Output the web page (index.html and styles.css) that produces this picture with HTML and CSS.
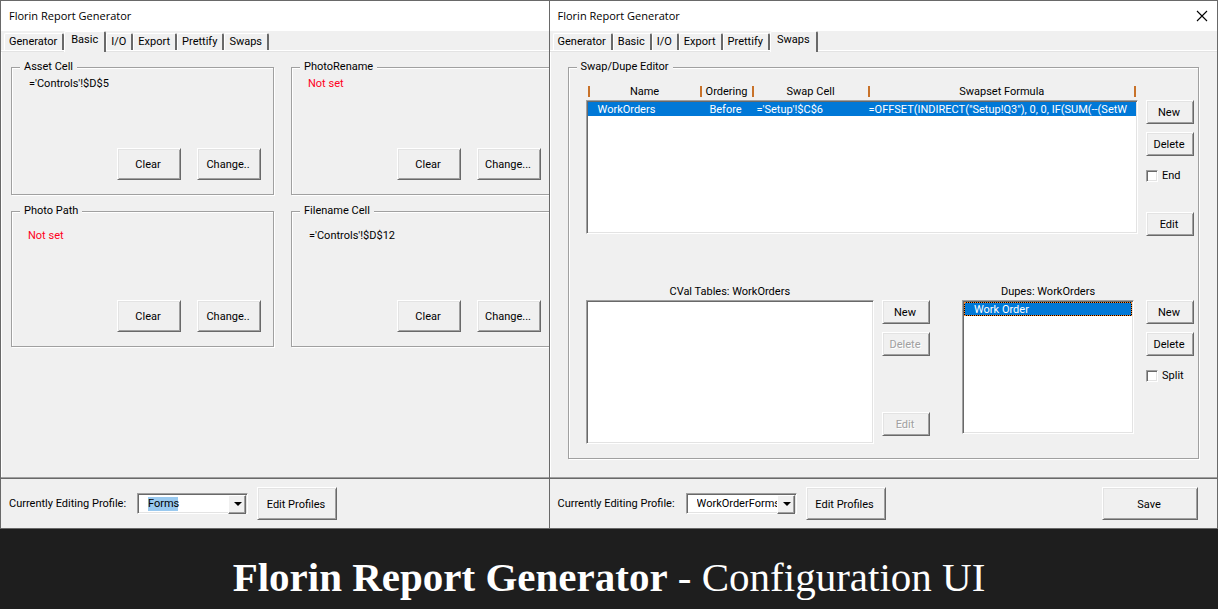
FILE: index.html
```html
<!DOCTYPE html>
<html lang="en">
<head>
<meta charset="utf-8">
<title>Florin Report Generator - Configuration UI</title>
<link rel="stylesheet" href="styles.css">
</head>
<body>
<main class="windows">
  <section class="window">
    <header class="titlebar"><h2 class="window-title">Florin Report Generator</h2></header>
    <nav class="tabs" role="tablist">
      <button class="tab" role="tab">Generator</button>
      <button class="tab selected" role="tab" aria-selected="true">Basic</button>
      <button class="tab" role="tab">I/O</button>
      <button class="tab" role="tab">Export</button>
      <button class="tab" role="tab">Prettify</button>
      <button class="tab" role="tab">Swaps</button>
    </nav>
    <div class="panel basic-panel">
      <fieldset class="frame cell-frame">
        <legend>Asset Cell</legend>
        <p class="value">='Controls'!$D$5</p>
        <div class="actions"><button class="btn">Clear</button><button class="btn">Change..</button></div>
      </fieldset>
      <fieldset class="frame cell-frame">
        <legend>PhotoRename</legend>
        <p class="value unset">Not set</p>
        <div class="actions"><button class="btn">Clear</button><button class="btn">Change...</button></div>
      </fieldset>
      <fieldset class="frame cell-frame tall">
        <legend>Photo Path</legend>
        <p class="value unset">Not set</p>
        <div class="actions"><button class="btn">Clear</button><button class="btn">Change..</button></div>
      </fieldset>
      <fieldset class="frame cell-frame tall">
        <legend>Filename Cell</legend>
        <p class="value">='Controls'!$D$12</p>
        <div class="actions"><button class="btn">Clear</button><button class="btn">Change...</button></div>
      </fieldset>
    </div>
    <footer class="profile-bar">
      <label class="profile-label" for="profile-a">Currently Editing Profile:</label>
      <span class="combo"><select id="profile-a" class="highlighted"><option>Forms</option></select></span>
      <button class="btn profile-btn">Edit Profiles</button>
    </footer>
  </section>

  <section class="window">
    <header class="titlebar">
      <h2 class="window-title">Florin Report Generator</h2>
      <button class="close" aria-label="Close"><svg width="12" height="12" viewBox="0 0 12 12"><path d="M1 1L11 11M11 1L1 11" stroke="#000" stroke-width="1.1" fill="none"/></svg></button>
    </header>
    <nav class="tabs" role="tablist">
      <button class="tab" role="tab">Generator</button>
      <button class="tab" role="tab">Basic</button>
      <button class="tab" role="tab">I/O</button>
      <button class="tab" role="tab">Export</button>
      <button class="tab" role="tab">Prettify</button>
      <button class="tab selected" role="tab" aria-selected="true">Swaps</button>
    </nav>
    <div class="panel swap-panel">
      <fieldset class="frame swap-frame">
        <legend>Swap/Dupe Editor</legend>
        <div class="swap-row">
          <table class="swap-table">
            <thead><tr><th>Name</th><th>Ordering</th><th>Swap Cell</th><th>Swapset Formula</th></tr></thead>
            <tbody class="sunken"><tr><td>WorkOrders</td><td>Before</td><td>='Setup'!$C$6</td><td>=OFFSET(INDIRECT("Setup!Q3"), 0, 0, IF(SUM(--(SetW</td></tr></tbody>
          </table>
          <div class="side">
            <button class="btn">New</button>
            <button class="btn">Delete</button>
            <label class="check"><input type="checkbox">End</label>
            <button class="btn last">Edit</button>
          </div>
        </div>
        <div class="list-row">
          <div class="list-box cval">
            <h3 class="list-title" id="cval-title">CVal Tables: WorkOrders</h3>
            <ul class="sunken list" role="listbox" aria-labelledby="cval-title"></ul>
          </div>
          <div class="side">
            <button class="btn">New</button>
            <button class="btn" disabled>Delete</button>
            <button class="btn last" disabled>Edit</button>
          </div>
          <div class="list-box dupes">
            <h3 class="list-title" id="dupes-title">Dupes: WorkOrders</h3>
            <ul class="sunken list" role="listbox" aria-labelledby="dupes-title"><li class="item" role="option" aria-selected="true">Work Order</li></ul>
          </div>
          <div class="side">
            <button class="btn">New</button>
            <button class="btn">Delete</button>
            <label class="check"><input type="checkbox">Split</label>
          </div>
        </div>
      </fieldset>
    </div>
    <footer class="profile-bar">
      <label class="profile-label" for="profile-b">Currently Editing Profile:</label>
      <span class="combo"><select id="profile-b"><option>WorkOrderForms</option></select></span>
      <button class="btn profile-btn">Edit Profiles</button>
      <button class="btn save">Save</button>
    </footer>
  </section>
</main>
<h1 class="caption"><strong>Florin Report Generator</strong> - Configuration UI</h1>
</body>
</html>
```
FILE: styles.css
```css
:root {
  --face: #f0f0f0;
  --shadow: #a0a0a0;
  --dark: #696969;
  --soft: #e3e3e3;
  --accent: #0078d7;
}

* { box-sizing: border-box; }

body {
  margin: 0;
  min-height: 100vh;
  display: flex;
  flex-direction: column;
  background: #1e1e1e;
  color: #000;
  font: 11px/14px Roboto, sans-serif;
}

button, select, input { font: inherit; color: inherit; }
h1, h2, h3, p, ul { margin: 0; padding: 0; font: inherit; }

.windows {
  flex: 1;
  display: grid;
  grid-template-columns: minmax(0, 549fr) minmax(0, 669fr);
  border-right: 1px solid var(--dark);
}

.window {
  display: flex;
  flex-direction: column;
  overflow: hidden;
  background: var(--face);
  border: 1px solid var(--dark);
  border-right: 0;
}

.titlebar {
  display: flex;
  align-items: center;
  justify-content: space-between;
  height: 30px;
  padding: 0 9px 0 8px;
  background: #fff;
}

.window-title { font-family: "Open Sans", sans-serif; font-size: 11px; }

.close {
  display: flex;
  padding: 0;
  border: 0;
  background: none;
}

.tabs {
  display: flex;
  align-items: flex-end;
  height: 21px;
  padding: 0 3px;
  box-shadow: inset 0 -1px var(--soft), inset 0 -2px #fff;
}

.tab {
  height: 17px;
  margin-bottom: 2px;
  padding: 0 5px 0 4px;
  background: var(--face);
  border: 1px solid #fff;
  border-right: 2px solid var(--dark);
  border-bottom: 0;
  border-radius: 2px 2px 0 0;
  line-height: 16px;
  white-space: nowrap;
}

.tab.selected {
  height: 21px;
  margin-bottom: 0;
  padding: 0 6px 4px;
}

.panel { flex: 1; padding: 8px 18px 19px 17px; border-left: 1px solid #fff; }

.basic-panel {
  display: grid;
  grid-template-columns: 263px 263px;
  align-content: start;
  gap: 9px 17px;
  padding-left: 9px;
}

.frame {
  display: flex;
  flex-direction: column;
  min-width: 0;
  margin: 0;
  padding: 0;
  border: 1px solid var(--shadow);
  box-shadow: inset 1px 1px #fff, 1px 1px #fff;
}

.frame legend {
  padding: 0 4px;
  background: var(--face);
}

.cell-frame { padding: 2px 12px 14px 17px; }
.cell-frame legend { margin-left: -9px; }
.cell-frame.tall { padding-top: 10px; }
.value { min-height: 72px; line-height: 16px; }
.value.unset { color: #ff0020; margin-left: -1px; }

.actions {
  display: flex;
  justify-content: flex-end;
  gap: 16px;
}

.btn {
  padding: 2px 2px 0 0;
  background: var(--face);
  border: 1px solid;
  border-color: #fff var(--dark) var(--dark) #fff;
  box-shadow: inset 1px 1px var(--soft), inset -1px -1px var(--shadow);
  white-space: nowrap;
}

.btn:disabled { color: var(--shadow); text-shadow: 1px 1px #fff; }
.actions .btn { width: 64px; height: 32px; }

.sunken {
  background: #fff;
  border: 1px solid;
  border-color: var(--shadow) #fff #fff var(--shadow);
  box-shadow: inset 1px 1px var(--dark), inset -1px -1px var(--soft);
}

.swap-panel { display: flex; }
.swap-frame { flex: 1; padding: 10px 4px 14px 17px; }
.swap-frame legend { margin-left: -9px; }

.swap-row { display: flex; gap: 8px; margin-bottom: 48px; }

.swap-table {
  flex: 1;
  min-width: 0;
  display: flex;
  flex-direction: column;
}

.swap-table thead, .swap-table tbody { display: block; }

.swap-table tr {
  display: grid;
  grid-template-columns: 112px 52px 116px minmax(0, 1fr);
}

.swap-table thead { height: 16px; padding: 2px 2px 0; }

.swap-table th {
  height: 11px;
  padding: 0;
  border-left: 2px solid #c8722a;
  font-weight: normal;
  line-height: 12px;
  white-space: nowrap;
}

.swap-table th:last-child { border-right: 2px solid #c8722a; }
.swap-table tbody { height: 134px; padding: 1px; }
.swap-table tbody tr { height: 14px; background: var(--accent); color: #fff; line-height: 16px; }
.swap-table td { padding: 0; white-space: nowrap; }
.swap-table td:nth-child(1) { padding-left: 10px; }
.swap-table td:nth-child(2) { text-align: center; }
.swap-table td:nth-child(3) { padding-left: 5px; }
.swap-table td:nth-child(4) { padding-left: 1px; }

.side {
  display: flex;
  flex-direction: column;
  gap: 8px;
  width: 48px;
  min-height: 152px;
  padding-top: 16px;
}

.side .btn { height: 24px; }
.side .last { margin-top: auto; }

.check {
  display: flex;
  align-items: center;
  gap: 4px;
  height: 24px;
}

.check input {
  appearance: none;
  width: 12px;
  height: 12px;
  margin: 0;
  background: #fff;
  border: 1px solid;
  border-color: var(--shadow) #fff #fff var(--shadow);
  box-shadow: inset 1px 1px var(--dark), inset -1px -1px var(--soft);
}

.list-row { display: flex; align-items: flex-start; }
.list-title { height: 16px; line-height: 16px; text-align: center; }
.list { list-style: none; padding: 1px; }
.cval { flex: 1; margin-right: 8px; }
.cval .list { height: 144px; }
.dupes { width: 172px; margin: 0 12px 0 32px; }
.dupes .list { height: 134px; }

.item {
  height: 14px;
  padding-left: 9px;
  border: 1px dotted #ff8728;
  background:
    linear-gradient(var(--accent), var(--accent)) padding-box,
    linear-gradient(#000, #000) border-box;
  color: #fff;
}

.profile-bar {
  display: flex;
  align-items: center;
  height: 50px;
  padding: 0 19px 0 8px;
  border-top: 1px solid var(--dark);
  box-shadow: 0 -1px var(--shadow);
}

.profile-label { width: 128px; white-space: nowrap; }

.combo {
  position: relative;
  display: flex;
  width: 111px;
  height: 21px;
  margin-right: 9px;
}

.combo select {
  appearance: none;
  width: 100%;
  padding: 0 10px;
  background: #fff;
  border: 1px solid;
  border-color: var(--shadow) #fff #fff var(--shadow);
  border-radius: 0;
  box-shadow: inset 1px 1px var(--dark), inset -1px -1px var(--soft);
}

.combo .highlighted {
  background: linear-gradient(#99c9ef, #99c9ef) 10px 3px / 30px 14px no-repeat #fff;
}

.combo::before {
  content: "";
  position: absolute;
  top: 2px;
  right: 2px;
  width: 16px;
  height: 17px;
  background: var(--face);
  border: 1px solid;
  border-color: #fff var(--dark) var(--dark) #fff;
  box-shadow: inset -1px -1px var(--shadow);
  pointer-events: none;
}

.combo::after {
  content: "";
  position: absolute;
  top: 9px;
  right: 6px;
  border: 4px solid transparent;
  border-top-color: #000;
  border-bottom: 0;
  pointer-events: none;
}

.profile-btn { width: 80px; height: 33px; }
.save { width: 96px; height: 33px; margin-left: auto; }

.caption {
  padding: 25px 16px 9px;
  color: #fff;
  font: 41px/46px "Liberation Serif", serif;
  text-align: center;
}
```
